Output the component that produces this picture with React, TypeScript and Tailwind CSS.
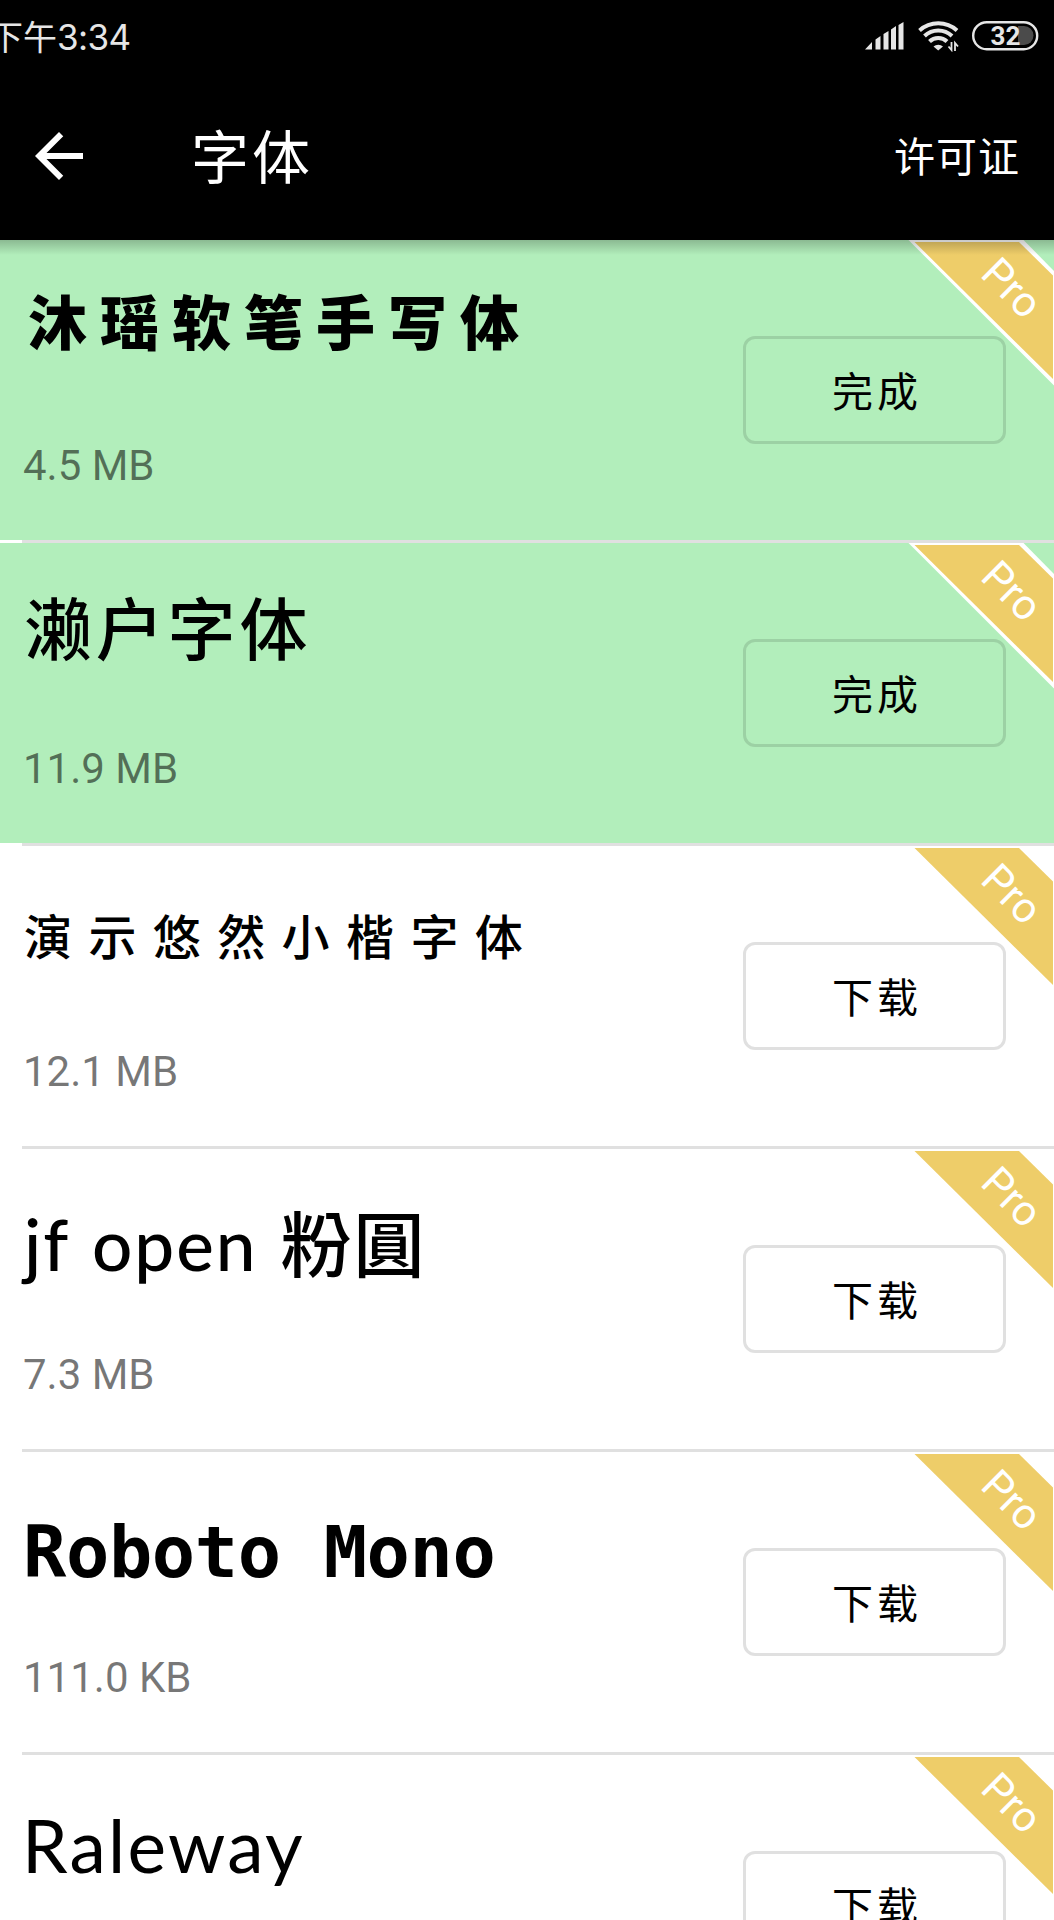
type FontItem = {
  name: string;
  size?: string;
  installed?: boolean;
  nameClass: string;
};

const FONTS: FontItem[] = [
  {
    name: '沐瑶软笔手写体',
    size: '4.5 MB',
    installed: true,
    nameClass: "font-['Noto_Sans_CJK_SC',sans-serif] font-black text-[59px] tracking-[13px] pl-[6px] pt-[40px]",
  },
  {
    name: '濑户字体',
    size: '11.9 MB',
    installed: true,
    nameClass: "font-['Noto_Sans_CJK_SC',sans-serif] font-medium text-[68px] tracking-[3.8px] pl-[2px] pt-[43px]",
  },
  {
    name: '演示悠然小楷字体',
    size: '12.1 MB',
    nameClass: "font-['Noto_Sans_CJK_SC',sans-serif] font-medium text-[48px] tracking-[16.4px] pl-[2px] pt-[48px]",
  },
  {
    name: 'jf open 粉圓',
    size: '7.3 MB',
    nameClass: "font-[Lato,'Noto_Sans_CJK_TC',sans-serif] font-medium text-[71px] tracking-[2px] [word-spacing:3px] pl-[2px] pt-[55px]",
  },
  {
    name: 'Roboto Mono',
    size: '111.0 KB',
    nameClass: "font-['DejaVu_Sans_Mono',monospace] font-bold text-[72px] tracking-[-0.4px] pl-[1px] pt-[60px]",
  },
  {
    name: 'Raleway',
    nameClass: 'font-[Lato,sans-serif] font-normal text-[73px] tracking-[2.3px] pt-[50px]',
  },
];

function SignalIcon() {
  return (
    <svg width="39" height="28" viewBox="0 0 39 28" fill="#e6e6e6">
      <path d="M0 27.5 7 20V27.5Z M10.5 17.5 15.5 14V27.5H10.5Z M18.5 12 23.5 9V27.5H18.5Z M26 7.5 31 4V27.5H26Z M33.5 3 38.5 0V27.5H33.5Z" />
    </svg>
  );
}

function WifiIcon() {
  return (
    <svg width="42" height="32" viewBox="0 0 42 32" fill="none" stroke="#e6e6e6">
      <path d="M1.5 10.5a28 28 0 0 1 37.5 0" strokeWidth="4" />
      <path d="M6.5 16a20 20 0 0 1 27.5 0" strokeWidth="4" />
      <path d="M11.5 21.5a12.5 12.5 0 0 1 17.5 0" strokeWidth="4" />
      <path d="M15.5 26.5a7 7 0 0 1 9.5 0L20.2 30.5Z" fill="#e6e6e6" stroke="none" />
      <path d="M33.5 22v8l-3-3.5M37 31v-8l3 3.5" strokeWidth="1.8" />
    </svg>
  );
}

function BatteryIcon() {
  return (
    <svg width="67" height="30" viewBox="0 0 67 30">
      <path d="M46 5h6a9.5 9.5 0 0 1 0 19h-6Z" fill="#4b4b4b" />
      <rect x="1.2" y="1.2" width="64" height="27" rx="13.5" fill="none" stroke="#e6e6e6" strokeWidth="2.4" />
      <text x="33.5" y="24" textAnchor="middle" fill="#e6e6e6" className="font-[Roboto,sans-serif] text-[26px] font-bold">
        32
      </text>
    </svg>
  );
}

function ProRibbon() {
  return (
    <svg className="absolute right-0 top-0" width="146" height="146" viewBox="-2 0 146 146">
      <path d="M-1.5 0H113.5L144 31V145.5Z" fill="#fff" />
      <path d="M4.5 2H109L143 35.5V139Z" fill="#eecd69" />
      <text transform="translate(69 35.5) rotate(45)" fill="#fff" className="font-[Roboto,sans-serif] text-[42px]">
        Pro
      </text>
    </svg>
  );
}

function FontRow({ item }: { item: FontItem }) {
  return (
    <li className="h-[303px] shrink-0">
      <div className={`relative flex h-[300px] justify-between ${item.installed ? 'bg-[#b2eebb]' : 'bg-white'}`}>
        <div className="flex flex-col justify-between pb-[42px] pl-[22px]">
          <div className={`h-[160px] whitespace-nowrap leading-[80px] text-black ${item.nameClass}`}>{item.name}</div>
          {item.size && (
            <div className="pl-[1px] font-[Roboto,sans-serif] text-[42px] leading-[64px] text-black/54">{item.size}</div>
          )}
        </div>
        <ProRibbon />
        <button className="relative mr-12 mt-24 flex h-[108px] w-[263px] items-center justify-center rounded-[12px] border-[3px] border-black/12 pl-[5px] font-['Noto_Sans_CJK_SC',sans-serif] text-[41px] tracking-[4px] text-black">
          {item.installed ? '完成' : '下载'}
        </button>
      </div>
      <div className="ml-[22px] h-[3px] bg-[#e0e0e0]" />
    </li>
  );
}

export default function App() {
  return (
    <div className="flex h-[1920px] w-[1054px] flex-col overflow-hidden bg-white">
      <header className="relative z-10 h-[240px] shrink-0 bg-black text-white">
        <div className="flex h-[72px] items-center justify-between pr-[15px]">
          <div className="-ml-[11px] font-['Noto_Sans_CJK_SC',sans-serif] text-[34px] leading-[72px] text-[#e6e6e6]">
            下午<span className="font-[Inter,sans-serif] text-[35px] tracking-[-0.6px]">3:34</span>
          </div>
          <div className="flex items-center">
            <SignalIcon />
            <div className="w-[14px]" />
            <WifiIcon />
            <div className="w-[12px]" />
            <BatteryIcon />
          </div>
        </div>
        <div className="flex h-[168px] items-center pl-[23px] pr-[34px] font-['Noto_Sans_CJK_SC',sans-serif]">
          <svg width="72" height="72" viewBox="0 0 24 24" fill="#fff">
            <path d="M20 11H7.83l5.59-5.59L12 4l-8 8 8 8 1.41-1.41L7.83 13H20v-2z" />
          </svg>
          <h1 className="ml-[96px] pb-[3px] text-[58px] tracking-[3px]">字体</h1>
          <button className="ml-auto pb-[2px] text-[41px] tracking-[1px]">许可证</button>
        </div>
        {/* toolbar shadow over the first row */}
        <div className="absolute inset-x-0 top-full h-[15px] bg-linear-to-b from-black/22 to-transparent" />
      </header>
      <ul className="flex flex-col">
        {FONTS.map((item) => (
          <FontRow key={item.name} item={item} />
        ))}
      </ul>
    </div>
  );
}
